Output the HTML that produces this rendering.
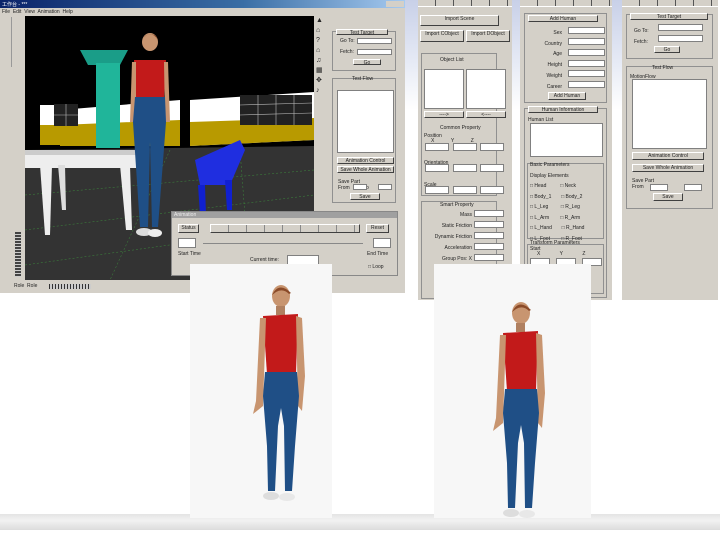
<!DOCTYPE html>
<html><head><style>
*{margin:0;padding:0;box-sizing:border-box}
body{width:720px;height:540px;position:relative;overflow:hidden;background:#fff;font-family:"Liberation Sans",sans-serif;font-size:5px;color:#222}
.a{position:absolute}
.p{position:absolute;background:#d4d0c8}
.w{position:absolute;background:#fff;border:1px solid #808080}
.b{position:absolute;background:#d4d0c8;border:1px solid #fff;border-right-color:#404040;border-bottom-color:#404040;text-align:center;font-size:5px;line-height:7px}
.g{position:absolute;border:1px solid #909090}
.t{position:absolute;font-size:5px;white-space:pre}
</style></head><body>
<div class="a" style="left:380px;top:0;width:250px;height:110px;background:linear-gradient(180deg,#c8d0e8,#e8ecf6 60%,#fff)"></div>
<div class="a" style="left:0;top:514px;width:720px;height:16px;background:linear-gradient(#e4e4e4,#f2f2f2 40%,#dcdcdc)"></div>

<div class="p" style="left:0;top:0;width:405px;height:293px"></div>
<div class="a" style="left:0;top:0;width:405px;height:8px;background:linear-gradient(90deg,#0a246a,#3a6ea5 60%,#a6caf0)"></div>
<div class="t" style="left:2px;top:1px;color:#fff">工作台 - ***</div>
<div class="a" style="left:386px;top:1px;width:18px;height:6px;background:#d4d0c8"></div>
<div class="t" style="left:2px;top:9px">File  Edit  View  Animation  Help</div>
<div class="a" style="left:0;top:17px;width:12px;height:50px;border-right:1px solid #999"></div>
<div class="a" style="left:25px;top:16px;width:289px;height:264px;background:#000"></div>
<svg class="a" style="left:25px;top:16px" width="289" height="264" viewBox="25 16 289 264">
<polygon points="25,150 314,146 314,280 25,280" fill="#333"/>
<rect x="40" y="105" width="20" height="40" fill="#fff"/>
<rect x="40" y="125" width="20" height="20" fill="#b89a00"/>
<polygon points="60,110 180,100 180,146 60,146" fill="#fff"/>
<polygon points="60,125 180,120 180,146 60,146" fill="#b89a00"/>
<polygon points="190,100 314,92 314,140 190,146" fill="#fff"/>
<polygon points="190,122 314,118 314,140 190,146" fill="#b89a00"/>
<rect x="240" y="95" width="72" height="30" fill="#222"/>
<rect x="54" y="104" width="24" height="22" fill="#222"/>
<g stroke="#bbb" stroke-width=".6"><line x1="240" y1="105" x2="312" y2="103"/><line x1="240" y1="115" x2="312" y2="113"/><line x1="258" y1="95" x2="258" y2="125"/><line x1="276" y1="95" x2="276" y2="125"/><line x1="294" y1="95" x2="294" y2="125"/><line x1="66" y1="104" x2="66" y2="126"/><line x1="54" y1="115" x2="78" y2="115"/></g>
<g stroke="#3c8a3c" stroke-width=".5" stroke-dasharray="2,2"><line x1="25" y1="195" x2="314" y2="170"/><line x1="25" y1="230" x2="314" y2="195"/><line x1="25" y1="265" x2="314" y2="225"/><line x1="170" y1="150" x2="110" y2="280"/><line x1="240" y1="150" x2="250" y2="280"/></g>
<polygon points="80,50 128,50 120,65 88,65" fill="#1a9d88"/>
<rect x="96" y="63" width="24" height="85" fill="#20b59a"/>
<polygon points="25,150 140,150 140,160 25,165" fill="#ccc"/>
<polygon points="25,155 140,155 140,168 25,168" fill="#eee"/>
<polygon points="40,165 52,165 50,235 45,235" fill="#eee"/>
<polygon points="58,165 65,165 66,210 62,210" fill="#ddd"/>
<polygon points="120,165 130,165 132,230 126,230" fill="#eee"/>
<polygon points="195,160 240,140 245,150 230,185 200,185" fill="#1f2ee0"/>
<polygon points="198,185 205,185 206,215 200,215" fill="#1020d0"/>
<polygon points="225,180 232,180 232,210 227,210" fill="#1020d0"/>
<g transform="translate(150,42)">
<ellipse cx="0" cy="0" rx="8" ry="9" fill="#c89570"/><path d="M-8,-2 Q0,-14 8,-2 L6,-6 Q0,-10 -5,-6Z" fill="#8a4a28"/>
<polygon points="-16,18 16,18 14,56 -14,56" fill="#c21a1a"/>
<polygon points="-18,20 -14,20 -14,80 -20,80" fill="#c89570"/><polygon points="14,20 18,20 20,80 15,80" fill="#c89570"/>
<polygon points="-15,55 15,55 16,80 8,185 2,185 0,100 -2,185 -10,185 -17,80" fill="#1f4f86"/>
<ellipse cx="-6" cy="190" rx="8" ry="4" fill="#ddd"/><ellipse cx="5" cy="191" rx="7" ry="4" fill="#eee"/>
</g>
</svg>
<div class="a" style="left:15px;top:232px;width:6px;height:45px;background:repeating-linear-gradient(#444 0 2px,#ccc 2px 3px)"></div>
<div class="t" style="left:14px;top:283px">Role  Role</div>
<div class="a" style="left:49px;top:284px;width:42px;height:5px;background:repeating-linear-gradient(90deg,#333 0 1px,#ccc 1px 3px)"></div>
<div class="a" style="left:315px;top:16px;width:10px;height:90px;background:#d4d0c8"><div class="t" style="left:1px;top:0;font-size:7px;line-height:10px">▲
⌂
?
⌂
♫
▦
✥
♪</div></div>
<div class="g" style="left:332px;top:31px;width:64px;height:40px"></div>
<div class="b" style="left:336px;top:29px;width:52px;height:6px">Test Target</div>
<div class="t" style="left:340px;top:38px">Go To:</div><div class="w" style="left:357px;top:38px;width:35px;height:6px"></div>
<div class="t" style="left:340px;top:49px">Fetch:</div><div class="w" style="left:357px;top:49px;width:35px;height:6px"></div>
<div class="b" style="left:353px;top:59px;width:28px;height:6px">Go</div>
<div class="g" style="left:332px;top:78px;width:64px;height:125px"></div>
<div class="t" style="left:352px;top:76px">Test Flow</div>
<div class="w" style="left:337px;top:90px;width:57px;height:63px"></div>
<div class="b" style="left:337px;top:157px;width:57px;height:7px">Animation Control</div>
<div class="b" style="left:337px;top:166px;width:57px;height:7px">Save Whole Animation</div>
<div class="t" style="left:338px;top:179px">Save Part
From          To</div>
<div class="w" style="left:353px;top:184px;width:14px;height:6px"></div><div class="w" style="left:378px;top:184px;width:14px;height:6px"></div>
<div class="b" style="left:350px;top:193px;width:30px;height:7px">Save</div>

<div class="p" style="left:171px;top:211px;width:227px;height:65px;border:1px solid #888"></div>
<div class="a" style="left:172px;top:212px;width:225px;height:6px;background:#a0a0a0"></div>
<div class="t" style="left:174px;top:212px;color:#eee">Animation</div>
<div class="b" style="left:178px;top:224px;width:21px;height:9px">Status</div>
<div class="b" style="left:210px;top:224px;width:150px;height:9px;background:repeating-linear-gradient(90deg,#d4d0c8 0 17px,#888 17px 18px)"></div>
<div class="b" style="left:366px;top:224px;width:23px;height:9px">Reset</div>
<div class="w" style="left:178px;top:238px;width:18px;height:10px"></div>
<div class="a" style="left:203px;top:243px;width:160px;height:1px;background:#888"></div>
<div class="w" style="left:373px;top:238px;width:18px;height:10px"></div>
<div class="t" style="left:178px;top:251px">Start Time</div><div class="t" style="left:367px;top:251px">End Time</div>
<div class="t" style="left:250px;top:257px">Current time:</div><div class="w" style="left:287px;top:255px;width:32px;height:10px"></div>
<div class="t" style="left:368px;top:264px">□ Loop</div>

<div class="p" style="left:418px;top:0;width:94px;height:300px"></div>
<div class="a" style="left:418px;top:0;width:94px;height:7px;border-bottom:1px solid #fff;background:repeating-linear-gradient(90deg,#d4d0c8 0 17px,#555 17px 18px)"></div>
<div class="b" style="left:420px;top:15px;width:79px;height:11px">Import Scene</div>
<div class="b" style="left:420px;top:30px;width:44px;height:12px">Import CObject</div>
<div class="b" style="left:466px;top:30px;width:44px;height:12px">Import DObject</div>
<div class="g" style="left:421px;top:53px;width:76px;height:143px"></div>
<div class="t" style="left:440px;top:57px">Object List</div>
<div class="w" style="left:424px;top:69px;width:40px;height:40px"></div><div class="w" style="left:466px;top:69px;width:40px;height:40px"></div>
<div class="b" style="left:424px;top:111px;width:40px;height:7px">----&gt;</div><div class="b" style="left:466px;top:111px;width:40px;height:7px">&lt;----</div>
<div class="t" style="left:440px;top:125px">Common Property</div>
<div class="t" style="left:424px;top:134px;line-height:5.4px">Position
     X            Y            Z



Orientation



Scale</div>
<div class="w" style="left:425px;top:143px;width:24px;height:8px"></div><div class="w" style="left:453px;top:143px;width:24px;height:8px"></div><div class="w" style="left:480px;top:143px;width:24px;height:8px"></div>
<div class="w" style="left:425px;top:164px;width:24px;height:8px"></div><div class="w" style="left:453px;top:164px;width:24px;height:8px"></div><div class="w" style="left:480px;top:164px;width:24px;height:8px"></div>
<div class="w" style="left:425px;top:186px;width:24px;height:8px"></div><div class="w" style="left:453px;top:186px;width:24px;height:8px"></div><div class="w" style="left:480px;top:186px;width:24px;height:8px"></div>
<div class="g" style="left:421px;top:201px;width:76px;height:98px"></div>
<div class="t" style="left:440px;top:202px">Smart Property</div>
<div class="t" style="left:422px;top:210px;text-align:right;width:50px;line-height:11px">Mass
Static Friction
Dynamic Friction
Acceleration
Group Pos: X</div>
<div class="w" style="left:474px;top:210px;width:30px;height:7px"></div><div class="w" style="left:474px;top:221px;width:30px;height:7px"></div><div class="w" style="left:474px;top:232px;width:30px;height:7px"></div><div class="w" style="left:474px;top:243px;width:30px;height:7px"></div><div class="w" style="left:474px;top:254px;width:30px;height:7px"></div>

<div class="p" style="left:520px;top:0;width:92px;height:300px"></div>
<div class="a" style="left:520px;top:0;width:92px;height:7px;border-bottom:1px solid #fff;background:repeating-linear-gradient(90deg,#d4d0c8 0 17px,#555 17px 18px)"></div>
<div class="g" style="left:524px;top:13px;width:83px;height:90px"></div>
<div class="b" style="left:528px;top:15px;width:70px;height:7px">Add Human</div>
<div class="t" style="left:530px;top:28px;text-align:right;width:32px;line-height:10.7px">Sex
Country
Age
Height
Weight
Career</div>
<div class="w" style="left:568px;top:27px;width:37px;height:7px"></div><div class="w" style="left:568px;top:38px;width:37px;height:7px"></div><div class="w" style="left:568px;top:49px;width:37px;height:7px"></div><div class="w" style="left:568px;top:60px;width:37px;height:7px"></div><div class="w" style="left:568px;top:70px;width:37px;height:7px"></div><div class="w" style="left:568px;top:81px;width:37px;height:7px"></div>
<div class="b" style="left:548px;top:92px;width:38px;height:8px">Add Human</div>
<div class="g" style="left:524px;top:108px;width:83px;height:190px"></div>
<div class="b" style="left:528px;top:106px;width:70px;height:7px">Human Information</div>
<div class="t" style="left:528px;top:117px">Human List</div>
<div class="w" style="left:530px;top:123px;width:73px;height:34px"></div>
<div class="g" style="left:527px;top:163px;width:77px;height:76px"></div>
<div class="t" style="left:530px;top:160px;line-height:10.5px">Basic Parameters
Display Elements
□ Head          □ Neck
□ Body_1       □ Body_2
□ L_Leg         □ R_Leg
□ L_Arm        □ R_Arm
□ L_Hand       □ R_Hand
□ L_Foot        □ R_Foot</div>
<div class="g" style="left:527px;top:244px;width:77px;height:50px"></div>
<div class="t" style="left:530px;top:241px;line-height:5.5px">Transform Parameters
Start
     X              Y              Z</div>
<div class="w" style="left:530px;top:258px;width:20px;height:8px"></div><div class="w" style="left:556px;top:258px;width:20px;height:8px"></div><div class="w" style="left:582px;top:258px;width:20px;height:8px"></div>

<div class="p" style="left:622px;top:0;width:96px;height:300px"></div>
<div class="a" style="left:622px;top:0;width:96px;height:7px;border-bottom:1px solid #fff;background:repeating-linear-gradient(90deg,#d4d0c8 0 17px,#555 17px 18px)"></div>
<div class="g" style="left:626px;top:14px;width:87px;height:45px"></div>
<div class="b" style="left:630px;top:13px;width:78px;height:7px">Test Target</div>
<div class="t" style="left:634px;top:26px;line-height:11px">Go To:
Fetch:</div>
<div class="w" style="left:658px;top:24px;width:45px;height:7px"></div><div class="w" style="left:658px;top:35px;width:45px;height:7px"></div>
<div class="b" style="left:654px;top:46px;width:26px;height:7px">Go</div>
<div class="g" style="left:626px;top:66px;width:87px;height:143px"></div>
<div class="t" style="left:652px;top:65px">Test Flow</div>
<div class="t" style="left:630px;top:74px">MotionFlow</div>
<div class="w" style="left:632px;top:79px;width:75px;height:70px"></div>
<div class="b" style="left:632px;top:152px;width:72px;height:8px">Animation Control</div>
<div class="b" style="left:632px;top:164px;width:72px;height:8px">Save Whole Animation</div>
<div class="t" style="left:632px;top:178px">Save Part
From              To</div>
<div class="w" style="left:650px;top:184px;width:18px;height:7px"></div><div class="w" style="left:684px;top:184px;width:18px;height:7px"></div>
<div class="b" style="left:653px;top:193px;width:30px;height:8px">Save</div>

<div class="a" style="left:190px;top:264px;width:142px;height:254px;background:#f7f7f7"></div>
<div class="a" style="left:434px;top:264px;width:157px;height:254px;background:#f7f7f7"></div>
<svg class="a" style="left:0;top:0" width="720" height="540">
<defs><g id="f">
<ellipse cx="0" cy="0" rx="9" ry="11" fill="#c89570"/><path d="M-9,-1 Q-2,-15 10,-3 L8,-2 Q2,-8 -5,-4Z" fill="#8a4a28"/>
<rect x="-5" y="10" width="9" height="9" fill="#b08060"/>
<polygon points="-18,20 17,18 15,78 -14,78" fill="#c21a1a"/>
<polygon points="-21,22 -15,22 -18,110 -28,118 -25,105" fill="#c89570"/><polygon points="15,20 21,22 24,80 21,115 17,110" fill="#c89570"/>
<polygon points="-16,76 16,76 18,100 14,150 11,195 4,195 3,130 0,112 -3,130 -6,195 -13,195 -14,150 -18,100" fill="#1f4f86"/>
<ellipse cx="-10" cy="200" rx="8" ry="4" fill="#ddd"/><ellipse cx="6" cy="201" rx="8" ry="4" fill="#e8e8e8"/>
</g></defs>
<use href="#f" x="281" y="296"/>
<use href="#f" x="521" y="313"/>
</svg>
</body></html>
